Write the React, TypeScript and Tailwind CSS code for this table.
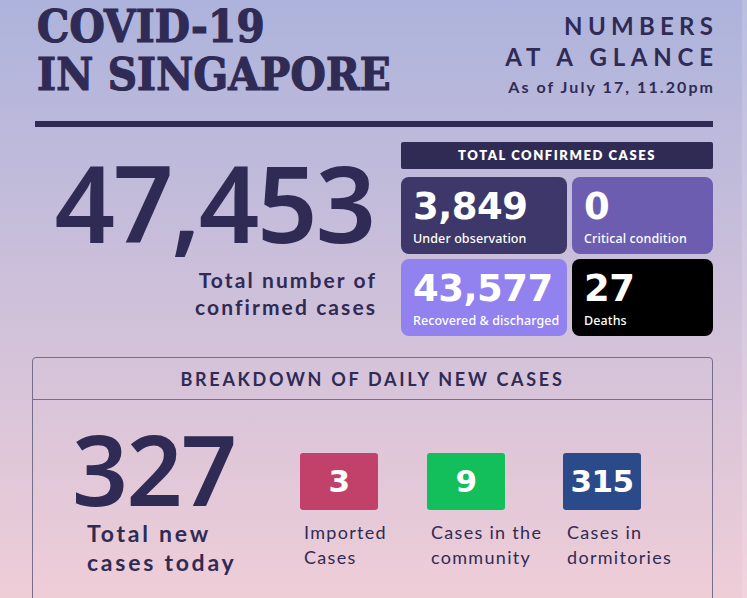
import React from "react";

const dark = "text-[#2f2b55]";

function Card({ value, label, bg }: { value: string; label: string; bg: string }) {
  return (
    <div className={`${bg} rounded-[8px] h-[77px] flex flex-col pl-[12px] pt-[11px] text-white`}>
      <div className="font-['DejaVu_Sans',sans-serif] font-bold text-[37px] leading-[37px] tracking-[-0.5px]">{value}</div>
      <div className="font-['Noto_Sans',sans-serif] font-medium text-[12.5px] leading-[16px] mt-[6px] tracking-[0.1px]">{label}</div>
    </div>
  );
}

function Small({ value, bg, l1, l2, w }: { value: string; bg: string; l1: string; l2: string; w: string }) {
  return (
    <div className={`${w} shrink-0 flex flex-col`}>
      <div className={`${bg} w-[78px] h-[57px] rounded-[3px] flex items-center justify-center text-white font-['DejaVu_Sans',sans-serif] font-bold text-[31px] leading-none tracking-[-0.5px]`}>
        {value}
      </div>
      <div className={`mt-[10px] pl-[4px] font-['Lato',sans-serif] text-[18px] leading-[25px] tracking-[1.3px] ${dark}`}>
        <div>{l1}</div>
        <div>{l2}</div>
      </div>
    </div>
  );
}

export default function App() {
  return (
    <div className="relative w-[747px] h-[598px] overflow-hidden bg-gradient-to-b from-[#adb3dc] to-[#efcdd7]">
      <div className="absolute right-0 top-0 w-[5px] h-full bg-white/15" />
      {/* header */}
      <div className="h-[121px] flex justify-between items-start ml-[37px] mr-[34px]">
        <div className={`pt-[3px] font-['DejaVu_Serif',serif] font-black text-[45px] leading-[48px] [font-stretch:condensed] tracking-[0.2px] [-webkit-text-stroke:1.2px_#2f2b55] ${dark}`}>
          <div>COVID-19</div>
          <div>IN SINGAPORE</div>
        </div>
        <div className={`pt-[10px] text-right font-['Lato',sans-serif] font-bold ${dark}`}>
          <div className="text-[24px] leading-[31px] tracking-[0.22em] mr-[-0.22em]">NUMBERS</div>
          <div className="text-[24px] leading-[31px] tracking-[0.24em] mr-[-0.24em]">AT A GLANCE</div>
          <div className="mt-[5px] text-[16px] leading-[20px] tracking-[0.13em] mr-[-0.13em]">As of July 17, 11.20pm</div>
        </div>
      </div>
      <div className="ml-[35px] mr-[34px] h-[6px] bg-[#2f2b55]" />

      {/* middle */}
      <div className="mt-[15px] flex ml-[33px] mr-[34px]">
        <div className="flex-1 flex flex-col items-end pr-[26px]">
          <div className={`mt-[-12px] mr-[1px] font-['Noto_Sans',sans-serif] font-semibold text-[106px] leading-[144px] tracking-[-2.2px] ${dark}`}>
            47,453
          </div>
          <div className={`mt-[-8px] text-right font-['Lato',sans-serif] font-bold text-[21px] leading-[27px] tracking-[0.1em] mr-[-0.1em] ${dark}`}>
            <div>Total number of</div>
            <div>confirmed cases</div>
          </div>
        </div>
        <div className="w-[312px] shrink-0">
          <div className="h-[27px] bg-[#2f2b54] rounded-[2px] flex items-center justify-center text-white font-['Lato',sans-serif] font-extrabold text-[13px] tracking-[0.12em]">
            TOTAL CONFIRMED CASES
          </div>
          <div className="mt-[8px] grid grid-cols-[166px_141px] gap-[5px]">
            <Card value="3,849" label="Under observation" bg="bg-[#3e3769]" />
            <Card value="0" label="Critical condition" bg="bg-[#6c5db1]" />
            <Card value="43,577" label="Recovered & discharged" bg="bg-[#9282ef]" />
            <Card value="27" label="Deaths" bg="bg-black" />
          </div>
        </div>
      </div>

      {/* breakdown */}
      <div className="mt-[21px] ml-[32px] w-[681px] h-[300px] border border-[#776e8e] rounded-[4px]">
        <div className={`h-[42px] border-b border-[#776e8e] flex items-center justify-center pt-[2px] font-['Lato',sans-serif] font-bold text-[18px] tracking-[0.15em] ${dark}`}>
          BREAKDOWN OF DAILY NEW CASES
        </div>
        <div className="flex">
          <div className="w-[267px] shrink-0">
            <div className={`pt-[1px] pl-[39px] font-['Noto_Sans',sans-serif] font-semibold text-[98px] leading-[134px] tracking-[-1.5px] ${dark}`}>
              327
            </div>
            <div className={`mt-[-16px] pl-[54px] font-['Lato',sans-serif] font-bold text-[23px] leading-[29px] tracking-[0.12em] ${dark}`}>
              <div>Total new</div>
              <div>cases today</div>
            </div>
          </div>
          <div className="flex pt-[53px]">
            <Small value="3" bg="bg-[#c1416a]" l1="Imported" l2="Cases" w="w-[127px]" />
            <Small value="9" bg="bg-[#12bf5b]" l1="Cases in the" l2="community" w="w-[136px]" />
            <Small value="315" bg="bg-[#2b4a8a]" l1="Cases in" l2="dormitories" w="w-[130px]" />
          </div>
        </div>
      </div>
    </div>
  );
}
